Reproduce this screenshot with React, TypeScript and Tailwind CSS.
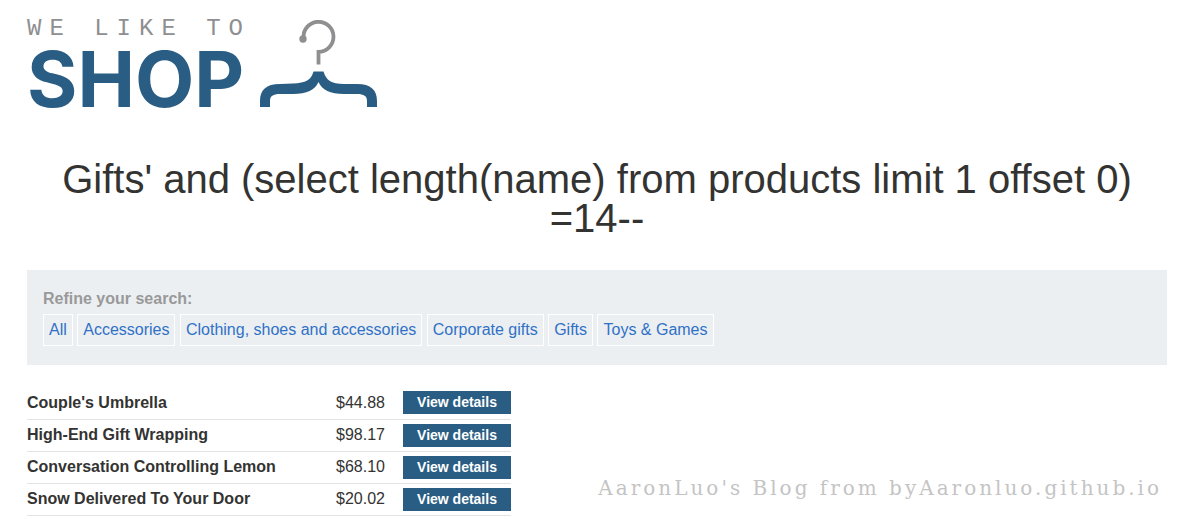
const categories: string[] = [
  'All',
  'Accessories',
  'Clothing, shoes and accessories',
  'Corporate gifts',
  'Gifts',
  'Toys & Games',
];

const products: { name: string; price: string }[] = [
  { name: "Couple's Umbrella", price: '$44.88' },
  { name: 'High-End Gift Wrapping', price: '$98.17' },
  { name: 'Conversation Controlling Lemon', price: '$68.10' },
  { name: 'Snow Delivered To Your Door', price: '$20.02' },
];

function Hanger() {
  return (
    <svg width="118" height="88" viewBox="0 0 118 88" fill="none" aria-hidden="true">
      <path d="M43.5 17.5A15 15 0 1 1 58.5 31.8V44.5" stroke="#8f8f91" strokeWidth="3.8" />
      <circle cx="43" cy="19" r="3.7" fill="#8f8f91" />
      <path
        d="M53.5 51.5H63.5C66 60 71 64 84 64H97C111 64 117 70 117 81V87H107V81C107 76 104 74 97 74H84C70 74 62 70 58.5 62C55 70 47 74 33 74H20C13 74 10 76 10 81V87H0V81C0 70 6 64 20 64L33 63.5C46 63 51 60 53.5 51.5Z"
        fill="#295d83"
      />
    </svg>
  );
}

function Logo() {
  return (
    <a href="#" aria-label="We like to shop" className="flex w-fit items-end gap-[9px]">
      <span className="flex flex-col">
        <span className="whitespace-nowrap font-['Liberation_Mono',monospace] text-2xl leading-6 tracking-[8px] text-[#8f8f91]">
          WE LIKE TO
        </span>
        <span className="mt-[9px] font-['Inter',sans-serif] text-[77px] leading-[58px] font-bold text-[#295d83]">
          SHOP
        </span>
      </span>
      <Hanger />
    </a>
  );
}

export default function App() {
  return (
    <div className="relative bg-white pt-[17px] pr-[19px] pl-[27px] font-['Liberation_Sans',Arial,sans-serif] text-base text-[#333332]">
      <header>
        <Logo />
      </header>

      <main>
        <h1 className="mt-[52px] text-center text-[40px] leading-[39px]">
          Gifts' and (select length(name) from products limit 1 offset 0) =14--
        </h1>

        <section className="mt-8 bg-[#ebeff2] px-4 pt-[18px] pb-[19px]">
          <p className="leading-[22px] font-bold text-[#999]">Refine your search:</p>
          <nav className="mt-1 leading-[32px]">
            {categories.map((name) => (
              <span key={name}>
                <a
                  href="#"
                  className="inline-block border border-white px-[5px] align-top leading-[30px] text-[#3071c6]"
                >
                  {name}
                </a>{' '}
              </span>
            ))}
          </nav>
        </section>

        <table className="mt-[22px] w-[484px] border-collapse">
          <tbody>
            {products.map((product) => (
              <tr key={product.name} className="h-8 border-b border-[#e4e4e4]">
                <th scope="row" className="p-0 text-left leading-5">
                  {product.name}
                </th>
                <td className="w-[67px] p-0 leading-5">{product.price}</td>
                <td className="w-[108px] p-0">
                  <button
                    type="button"
                    className="block w-full bg-[#295d83] text-sm leading-[23px] font-bold text-white"
                  >
                    View details
                  </button>
                </td>
              </tr>
            ))}
          </tbody>
        </table>
      </main>

      <p className="absolute right-6 bottom-4 font-['DejaVu_Serif',serif] text-xl leading-6 tracking-[3px] text-[#c4c4c4]">
        AaronLuo's Blog from byAaronluo.github.io
      </p>
    </div>
  );
}
